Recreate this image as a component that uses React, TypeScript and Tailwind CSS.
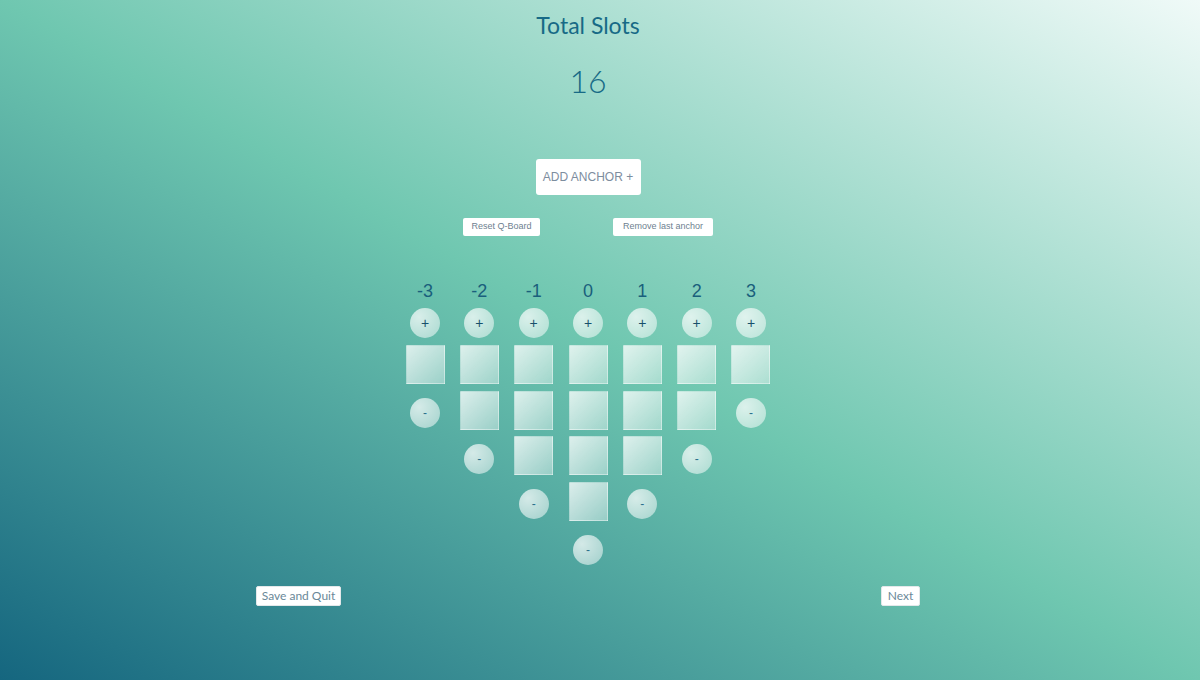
import React from "react";

const cols = [
  { label: "-3", n: 1 },
  { label: "-2", n: 2 },
  { label: "-1", n: 3 },
  { label: "0", n: 4 },
  { label: "1", n: 3 },
  { label: "2", n: 2 },
  { label: "3", n: 1 },
];

function Circle({ children, small }: { children: React.ReactNode; small?: boolean }) {
  return (
    <div
      className={
        small
          ? "w-[30px] h-[30px] rounded-full flex items-center justify-center bg-[radial-gradient(circle_at_30%_30%,rgba(255,255,255,0.75),rgba(255,255,255,0.45))] text-[#2b6f8c] font-['Liberation_Sans',Arial,sans-serif] text-[12px] leading-none"
          : "w-[30px] h-[30px] rounded-full flex items-center justify-center bg-[radial-gradient(circle_at_30%_30%,rgba(255,255,255,0.75),rgba(255,255,255,0.45))] text-[#17506b] font-['Liberation_Sans',Arial,sans-serif] text-[14px] leading-none"
      }
    >
      {children}
    </div>
  );
}

function Square() {
  return (
    <div className="w-[39px] h-[39px] bg-[linear-gradient(135deg,rgba(255,255,255,0.78),rgba(255,255,255,0.38))] border border-[rgba(255,255,255,0.12)]" />
  );
}

export default function App() {
  return (
    <div className="w-full min-h-[680px] h-[680px] overflow-hidden bg-[linear-gradient(to_top_right,#15667f_0%,#6fc7b0_50%,#f0faf8_100%)]">
      <div className="w-[1176px] flex flex-col items-center">
        <div className="pt-[12px] text-[23px] leading-[26px] text-[#176a86] font-['Lato',sans-serif]">Total Slots</div>
        <div className="mt-[24px] text-[32px] leading-[38px] text-[#176a86] font-['Lato',sans-serif] font-light">16</div>
        <button className="mt-[59px] w-[105px] h-[36px] bg-white rounded-[3px] text-[12px] text-[#7d8d9e] font-['Liberation_Sans',Arial,sans-serif]">
          ADD ANCHOR +
        </button>
        <div className="mt-[23px] flex gap-[73px]">
          <button className="w-[77px] h-[18px] bg-white rounded-[2px] text-[9px] text-[#6e7f90] font-['Liberation_Sans',Arial,sans-serif]">
            Reset Q-Board
          </button>
          <button className="w-[100px] h-[18px] bg-white rounded-[2px] text-[9px] text-[#6e7f90] font-['Liberation_Sans',Arial,sans-serif]">
            Remove last anchor
          </button>
        </div>
        <div className="mt-[45px] flex items-start gap-x-[14.33px]">
          {cols.map((c) => (
            <div key={c.label} className="w-[40px] flex flex-col items-center">
              <div className="text-[18px] leading-[20px] text-[#1a5f7c] font-['Liberation_Sans',Arial,sans-serif]">{c.label}</div>
              <div className="mt-[7px]">
                <Circle>+</Circle>
              </div>
              <div className="mt-[7px] flex flex-col gap-[6.5px]">
                {Array.from({ length: c.n }).map((_, i) => (
                  <Square key={i} />
                ))}
              </div>
              <div className="mt-[14px]">
                <Circle small>-</Circle>
              </div>
            </div>
          ))}
        </div>
        <div className="mt-[21.5px] w-[664px] flex justify-between">
          <button className="h-[20px] w-[85px] bg-white rounded-[2px] border border-[#e3e8ea] text-[12px] text-[#6a8898] font-['Lato',sans-serif]">
            Save and Quit
          </button>
          <button className="h-[20px] w-[39px] bg-white rounded-[2px] border border-[#e3e8ea] text-[12px] text-[#6a8898] font-['Lato',sans-serif]">
            Next
          </button>
        </div>
      </div>
    </div>
  );
}
